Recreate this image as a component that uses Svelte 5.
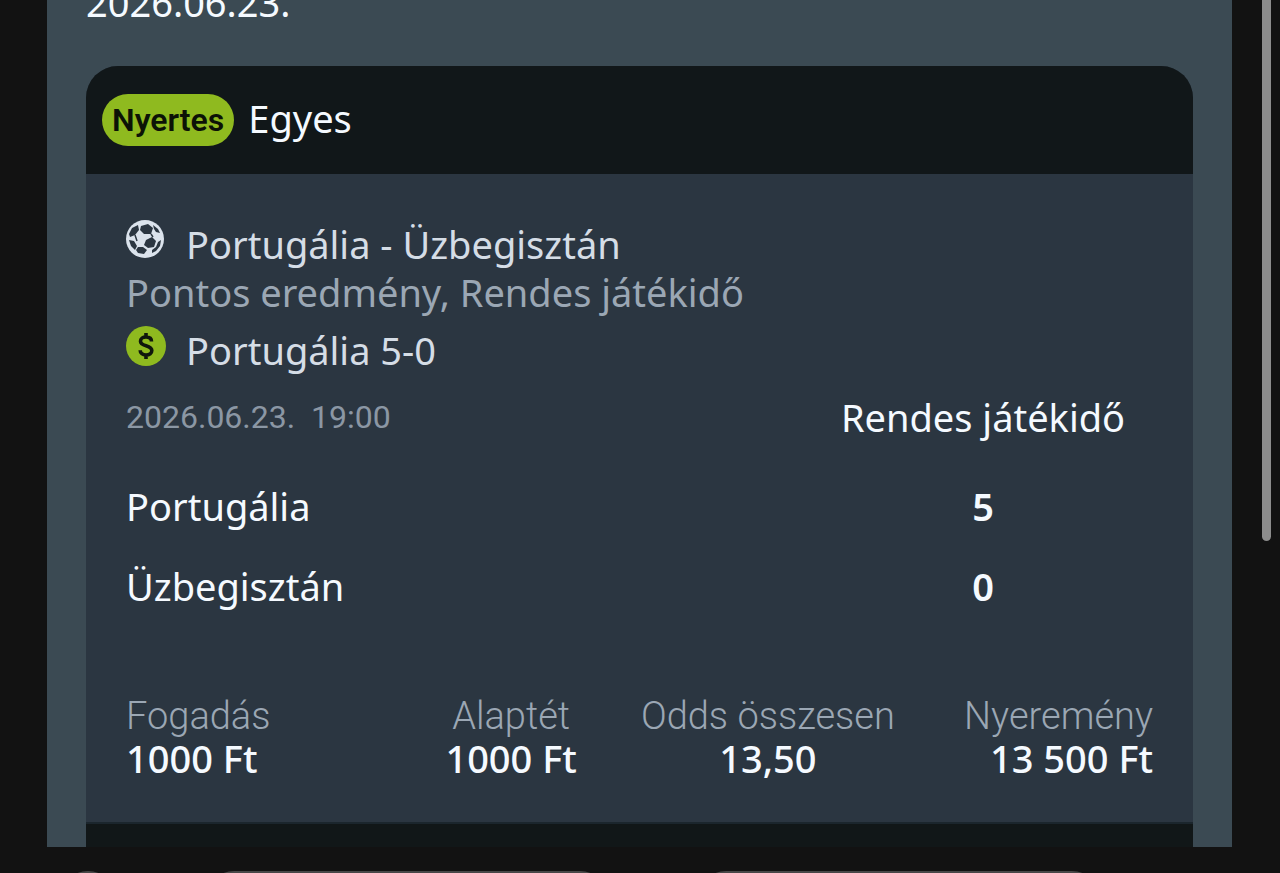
<script>
	const slip = {
		date: '2026.06.23.',
		status: 'Nyertes',
		type: 'Egyes'
	};

	const event = {
		name: 'Portugália - Üzbegisztán',
		market: 'Pontos eredmény, Rendes játékidő',
		pick: 'Portugália 5-0',
		day: '2026.06.23.',
		time: '19:00',
		period: 'Rendes játékidő'
	};

	const scores = [
		{ team: 'Portugália', goals: 5 },
		{ team: 'Üzbegisztán', goals: 0 }
	];

	const summary = [
		{ label: 'Fogadás', value: '1000 Ft' },
		{ label: 'Alaptét', value: '1000 Ft' },
		{ label: 'Odds összesen', value: '13,50' },
		{ label: 'Nyeremény', value: '13 500 Ft' }
	];
</script>

<div class="page">
	<main class="panel">
		<p class="slip-date">{slip.date}</p>
		<article class="card">
			<header class="card-header">
				<span class="badge">{slip.status}</span>
				<h2>{slip.type}</h2>
			</header>

			<div class="card-body">
				<div class="line">
					<svg class="icon" viewBox="0 0 40 40" aria-hidden="true">
						<circle cx="19" cy="19" r="19" fill="#dbe3ec" />
						<g fill="#2b3641">
							<path d="M15 6 L22 4 L27 8 L25 14 L18 14 L14 10 Z" />
							<path d="M12 5 L13 10 L9 15 L4 17 L3 14 L6 8 Z" />
							<path d="M3 20 L8 21 L11 26 L9 30 L5 26 Z" />
							<path d="M20 20 L26 17 L30 21 L28 27 L22 28 L18 25 Z" />
							<path d="M12 27 L17 27 L21 30 L18 34 L12 33 L10 30 Z" />
							<path d="M27 5 L32 9 L34 13 L30 12 L28 9 Z" />
							<path d="M32 22 L35 20 L34 26 L30 31 L26 33 L26 30 L30 27 Z" />
						</g>
						<path
							d="M9 15 L11 21 M25 14 L27 17"
							fill="none"
							stroke="#2b3641"
							stroke-width="1.5"
						/>
					</svg>
					<span>{event.name}</span>
				</div>
				<p class="market">{event.market}</p>
				<div class="line">
					<svg class="icon" viewBox="0 0 40 40" aria-hidden="true">
						<circle cx="20" cy="20" r="20" fill="#8fba1f" />
						<path
							d="M25.5 15.5 C25.5 12.5 23.2 11 20 11 C16.800 11 14.5 12.600 14.5 15.200 C14.5 21 25.800 18.500 25.800 24.500 C25.800 27.300 23.500 29 20 29 C16.500 29 14.200 27.200 14.200 24.200 M20 7 V11.500 M20 28.500 V33"
							fill="none"
							stroke="#10170c"
							stroke-width="3.600"
						/>
					</svg>
					<span>{event.pick}</span>
				</div>

				<table class="scores">
					<thead>
						<tr>
							<th class="kickoff" scope="col">
								<time>{event.day}&nbsp; {event.time}</time>
							</th>
							<th class="period" scope="col">{event.period}</th>
						</tr>
					</thead>
					<tbody>
						{#each scores as row}
							<tr>
								<th scope="row">{row.team}</th>
								<td>{row.goals}</td>
							</tr>
						{/each}
					</tbody>
				</table>

				<dl class="summary">
					{#each summary as item}
						<div>
							<dt>{item.label}</dt>
							<dd>{item.value}</dd>
						</div>
					{/each}
				</dl>
			</div>
			<footer class="card-footer"></footer>
		</article>
	</main>

	<div class="bottom-bar">
		<span class="dot"></span>
		<span class="tab"></span>
		<span class="tab"></span>
	</div>
	<div class="scrollbar"></div>
</div>

<style>
	:global(body) {
		background: #121212;
	}
	.page {
		position: relative;
		display: flex;
		flex-direction: column;
		height: 100vh;
		overflow: hidden;
		background: #121212;
		color: #f5faff;
		font-family: 'Noto Sans', 'Open Sans', sans-serif;
		font-size: 38px;
		line-height: 48px;
	}
	p,
	h2,
	dl,
	dd {
		margin: 0;
	}

	/* scrolled to the end of the slip, the date is cut at the top */
	.panel {
		flex: 1;
		min-height: 0;
		display: flex;
		flex-direction: column;
		justify-content: flex-end;
		overflow: hidden;
		margin: 0 48px 0 47px;
		padding: 0 39px;
		background: #3b4a53;
	}
	.slip-date {
		margin-bottom: 40px;
	}
	.card {
		flex: none;
		border-radius: 32px 32px 0 0;
		overflow: hidden;
		background: #2b3641;
	}
	.card-header {
		display: flex;
		align-items: flex-start;
		gap: 14px;
		padding: 28px 16px;
		background: #111719;
	}
	.card-header h2 {
		font-size: 38px;
		font-weight: 400;
	}
	.badge {
		padding: 2px 10px;
		border-radius: 26px;
		background: #8fba1f;
		color: #0c1206;
		font-family: Roboto, sans-serif;
		font-size: 32px;
		font-weight: 600;
	}

	.card-body {
		padding: 46px 40px 44px;
		border-bottom: 2px solid #1b262d;
	}
	.line {
		display: flex;
		gap: 20px;
		color: #d5dde6;
	}
	.icon {
		flex: none;
		width: 40px;
		height: 40px;
	}
	.market {
		margin-bottom: 10px;
		color: #9ba7b4;
	}

	.scores {
		width: 100%;
		border-collapse: collapse;
	}
	.scores th,
	.scores td {
		height: 80px;
		padding: 0;
		font-weight: 400;
		text-align: left;
	}
	.scores thead th {
		height: 86px;
		padding-bottom: 6px;
	}
	.scores .kickoff {
		color: #8b97a4;
		font-family: Roboto, sans-serif;
		font-size: 32px;
	}
	.scores .period,
	.scores td {
		width: 340px;
		text-align: center;
	}
	.scores td {
		font-weight: 600;
	}

	.summary {
		display: grid;
		grid-template-columns: repeat(4, 1fr);
		margin-top: 68px;
		text-align: center;
		white-space: nowrap;
	}
	.summary div:first-child {
		text-align: left;
	}
	.summary div:last-child {
		text-align: right;
	}
	.summary dt {
		color: #9ba7b4;
		font-family: Roboto, sans-serif;
		font-weight: 300;
		line-height: 44px;
	}
	.summary dd {
		font-weight: 500;
		line-height: 40px;
	}
	.card-footer {
		height: 23px;
		background: #111718;
	}

	/* tops of the controls that lie below the fold */
	.bottom-bar {
		display: flex;
		flex: none;
		gap: 90px;
		height: 2px;
		padding: 24px 180px 0 60px;
		overflow: hidden;
	}
	.dot,
	.tab {
		height: 56px;
		border-radius: 28px;
		background: #484848;
	}
	.dot {
		width: 56px;
	}
	.tab {
		flex: 1;
	}
	.scrollbar {
		position: absolute;
		top: 0;
		right: 9px;
		width: 9px;
		height: 62%;
		border-radius: 0 0 5px 5px;
		background: #8c8c8c;
	}
</style>
